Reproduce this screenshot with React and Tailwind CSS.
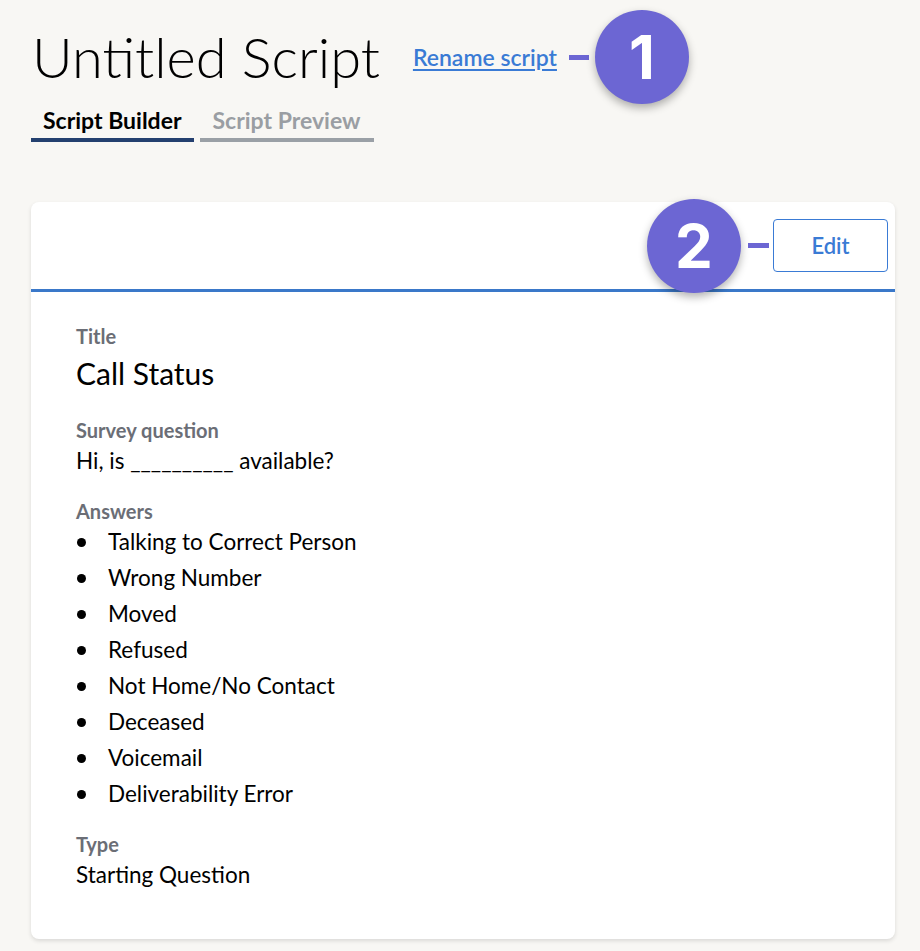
const answers = [
  'Talking to Correct Person',
  'Wrong Number',
  'Moved',
  'Refused',
  'Not Home/No Contact',
  'Deceased',
  'Voicemail',
  'Deliverability Error',
];

function Marker({ n }) {
  return (
    <div className="flex h-[94px] w-[94px] shrink-0 items-center justify-center rounded-full bg-[#6c66d3] text-[60px] font-bold leading-none text-white shadow-[0_4px_8px_rgba(0,0,0,0.3)] [font-family:Inter,'Noto_Sans',sans-serif]">
      {n}
    </div>
  );
}

function Field({ label, children, className = '' }) {
  return (
    <div className={className}>
      <p className="text-[20px] font-bold leading-[24px] text-[#6b6e76]">{label}</p>
      {children}
    </div>
  );
}

export default function App() {
  return (
    <div className="min-h-[951px] bg-[#f8f7f4] pl-[31px] pr-[25px] pt-[10px] text-black [font-family:Lato,'Noto_Sans',sans-serif]">
      <div className="flex items-center">
        <h1 className="pl-[1px] text-[56px] font-light leading-none">Untitled Script</h1>
        <a href="#" className="ml-[33px] text-[23px] font-semibold text-[#3a7bd5] underline underline-offset-[3px]">Rename script</a>
        <div className="ml-[12px] h-[5px] w-[20px] bg-[#6c66d3]" />
        <div className="ml-[6px]">
          <Marker n="1" />
        </div>
      </div>

      <div className="mt-[2px] flex gap-[6px]">
        <div className="border-b-4 border-[#24406f] px-[12px] pb-[4px] text-[23px] font-bold leading-[28px]">Script Builder</div>
        <div className="border-b-4 border-[#9aa0a6] px-[13px] pb-[4px] text-[23px] font-bold leading-[28px] text-[#9a9ea3]">Script Preview</div>
      </div>

      <div className="mt-[60px] rounded-[8px] bg-white shadow-[0_2px_4px_rgba(0,0,0,0.12)]">
        <div className="flex h-[90px] items-center justify-end border-b-[3px] border-[#3a78c9] pr-[7px]">
          <Marker n="2" />
          <div className="ml-[7px] h-[5px] w-[21px] bg-[#6c66d3]" />
          <button className="ml-[4px] h-[53px] w-[115px] rounded-[4px] border border-[#3a7bd5] text-[22px] font-semibold text-[#3a7bd5]">Edit</button>
        </div>

        <div className="px-[45px] pb-[49px] pt-[32px]">
          <Field label="Title">
            <p className="mt-[7px] text-[30px] leading-[36px]">Call Status</p>
          </Field>
          <Field label="Survey question" className="mt-[27px]">
            <p className="mt-[4px] text-[22.5px] leading-[30px]">Hi, is __________ available?</p>
          </Field>
          <Field label="Answers" className="mt-[23px]">
            <ul className="mt-[1px]">
              {answers.map((a) => (
                <li key={a} className="flex items-center text-[22.5px] leading-[36px]">
                  <span className="ml-[1px] mr-[22px] h-[9px] w-[9px] rounded-full bg-black" />
                  {a}
                </li>
              ))}
            </ul>
          </Field>
          <Field label="Type" className="mt-[20px]">
            <p className="mt-[4px] text-[22.5px] leading-[30px]">Starting Question</p>
          </Field>
        </div>
      </div>
    </div>
  );
}
